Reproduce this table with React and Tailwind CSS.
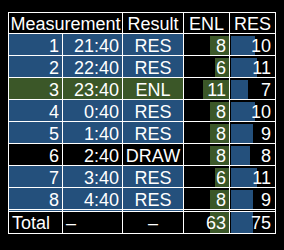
import React from 'react';

const rows = [
  { n: 1, t: '21:40', r: 'RES', tone: 'blue', enl: 8, res: 10 },
  { n: 2, t: '22:40', r: 'RES', tone: 'blue', enl: 6, res: 11 },
  { n: 3, t: '23:40', r: 'ENL', tone: 'green', enl: 11, res: 7 },
  { n: 4, t: '0:40', r: 'RES', tone: 'blue', enl: 8, res: 10 },
  { n: 5, t: '1:40', r: 'RES', tone: 'blue', enl: 8, res: 9 },
  { n: 6, t: '2:40', r: 'DRAW', tone: 'black', enl: 8, res: 8 },
  { n: 7, t: '3:40', r: 'RES', tone: 'blue', enl: 6, res: 11 },
  { n: 8, t: '4:40', r: 'RES', tone: 'blue', enl: 8, res: 9 },
];

const toneBg = {
  blue: 'bg-[#24507c]',
  green: 'bg-[#3b5728]',
  black: 'bg-black',
};

const barWidth = (v) => Math.round(v * 2.4);

const EnlCell = ({ value, width, last }) => (
  <div
    className={`relative w-[46px] border-r border-white bg-black pr-[3px] pt-[3px] text-right ${
      last ? 'border-b-[3px] border-double' : 'border-b'
    }`}
  >
    <div className="absolute right-0 top-[2px] bottom-0 bg-[#3b5728]" style={{ width }} />
    <span className="relative">{value}</span>
  </div>
);

const ResCell = ({ value, width, last }) => (
  <div
    className={`relative w-[46px] border-r border-white bg-black pr-[4px] pt-[3px] text-right ${
      last ? 'border-b-[3px] border-double' : 'border-b'
    }`}
  >
    <div className="absolute left-[1px] top-[2px] bottom-0 bg-[#24507c]" style={{ width }} />
    <span className="relative">{value}</span>
  </div>
);

export default function App() {
  return (
    <div
      className="h-[250px] w-[284px] bg-black pl-2 pt-3 text-[18px] leading-[18px] text-white"
      style={{ fontFamily: '"Liberation Sans", Arial, sans-serif' }}
    >
      <div className="w-[268px] border-l border-t border-white">
        {/* header */}
        <div className="flex h-[21px]">
          <div className="w-[114px] border-b border-r border-white pt-[2px] text-center">Measurement</div>
          <div className="w-[61px] border-b border-r border-white pt-[2px] text-center">Result</div>
          <div className="w-[46px] border-b border-r border-white pt-[2px] text-center">ENL</div>
          <div className="w-[46px] border-b border-r border-white pt-[2px] text-center">RES</div>
        </div>

        {rows.map((row, i) => {
          const last = i === rows.length - 1;
          const bottom = last ? 'border-b-[3px] border-double' : 'border-b';
          const bg = toneBg[row.tone];
          return (
            <div key={row.n} className={`flex ${last ? 'h-[24px]' : 'h-[22px]'}`}>
              <div className={`w-[54px] border-r border-white pr-[3px] pt-[3px] text-right ${bottom} ${bg}`}>
                {row.n}
              </div>
              <div className={`w-[60px] border-r border-white pr-[3px] pt-[3px] text-right ${bottom} ${bg}`}>
                {row.t}
              </div>
              <div className={`w-[61px] border-r border-white pt-[3px] text-center ${bottom} ${bg}`}>
                {row.r}
              </div>
              <EnlCell value={row.enl} width={barWidth(row.enl)} last={last} />
              <ResCell value={row.res} width={barWidth(row.res)} last={last} />
            </div>
          );
        })}

        {/* total */}
        <div className="flex h-[22px]">
          <div className="w-[54px] border-b border-r border-white pl-[3px] pt-[2px]">Total</div>
          <div className="w-[60px] border-b border-r border-white pl-[3px] pt-[2px]">–</div>
          <div className="w-[61px] border-b border-r border-white pt-[2px] text-center">–</div>
          <div className="relative w-[46px] border-b border-r border-white pr-[3px] pt-[2px] text-right">
            <div className="absolute right-0 top-0 bottom-0 bg-[#3b5728]" style={{ width: 19 }} />
            <span className="relative">63</span>
          </div>
          <div className="relative w-[46px] border-b border-r border-white pr-[4px] pt-[2px] text-right">
            <div className="absolute left-[1px] top-0 bottom-0 bg-[#24507c]" style={{ width: 22 }} />
            <span className="relative">75</span>
          </div>
        </div>
      </div>
    </div>
  );
}
